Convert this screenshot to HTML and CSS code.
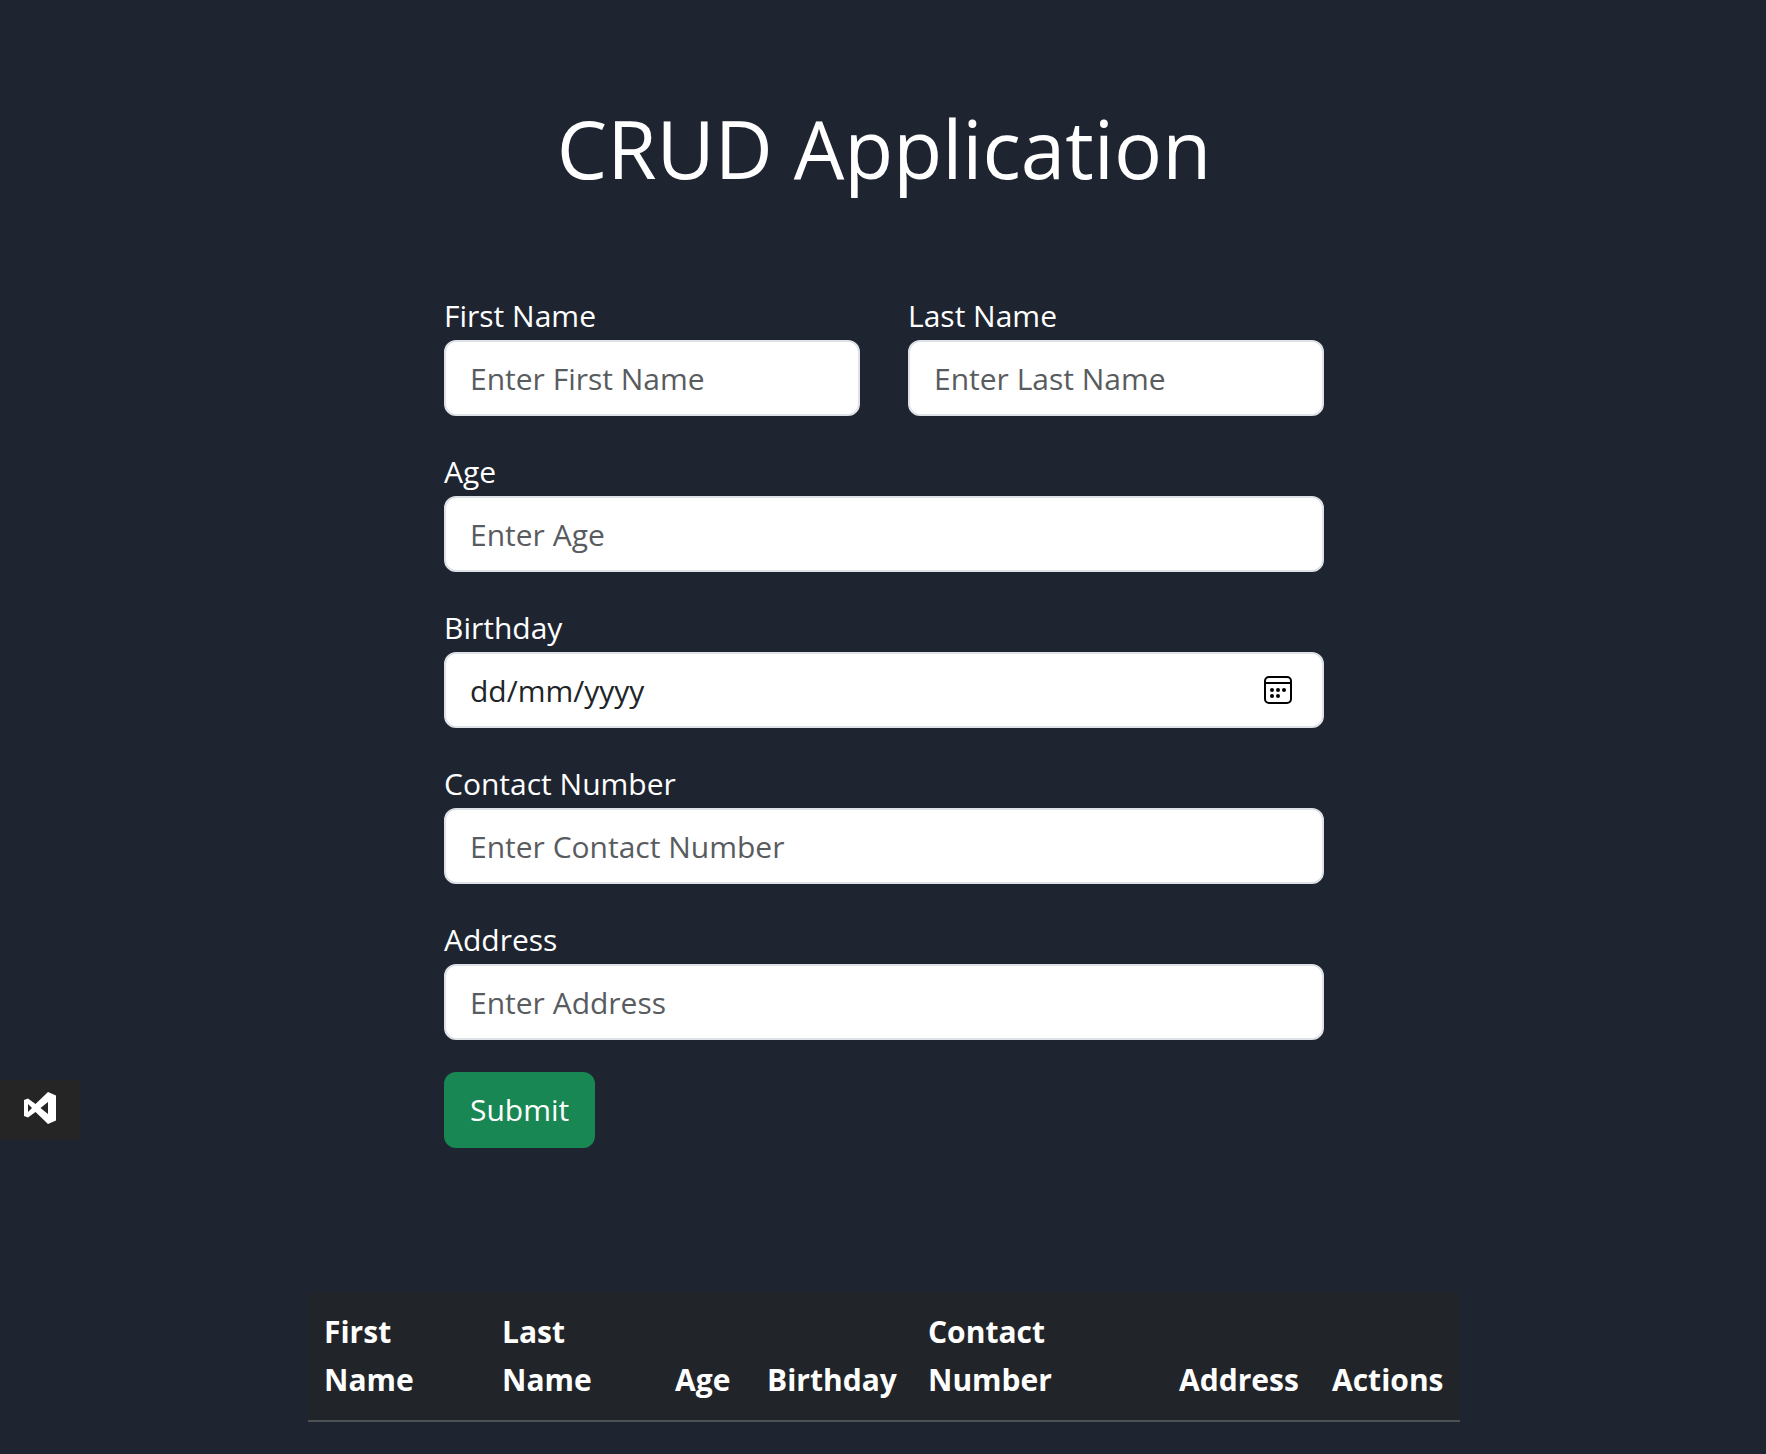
FILE: index.html
```html
<!DOCTYPE html>
<html lang="en">
<head>
<meta charset="utf-8">
<meta name="viewport" content="width=device-width, initial-scale=1">
<title>CRUD Application</title>
<link rel="stylesheet" href="styles.css">
</head>
<body>
<main class="page">
  <h1 class="title">CRUD Application</h1>
  <form class="form">
    <div class="row">
      <div class="field">
        <label for="first-name">First Name</label>
        <input class="control" id="first-name" type="text" placeholder="Enter First Name">
      </div>
      <div class="field">
        <label for="last-name">Last Name</label>
        <input class="control" id="last-name" type="text" placeholder="Enter Last Name">
      </div>
    </div>
    <div class="field">
      <label for="age">Age</label>
      <input class="control" id="age" type="text" inputmode="numeric" placeholder="Enter Age">
    </div>
    <div class="field">
      <label for="birthday">Birthday</label>
      <div class="date">
        <input class="control control-date" id="birthday" type="text" placeholder="dd/mm/yyyy">
        <button class="date-button" type="button" aria-label="Open calendar">
          <svg width="28" height="28" viewBox="0 0 28 28">
            <rect x="1" y="1" width="26" height="26" rx="4" fill="none" stroke="#000" stroke-width="2"/>
            <path d="M1 7h26" stroke="#000" stroke-width="2"/>
            <circle cx="8" cy="14" r="2"/><circle cx="14" cy="14" r="2"/><circle cx="20" cy="14" r="2"/>
            <circle cx="8" cy="20" r="2"/><circle cx="14" cy="20" r="2"/>
          </svg>
        </button>
      </div>
    </div>
    <div class="field">
      <label for="contact">Contact Number</label>
      <input class="control" id="contact" type="tel" placeholder="Enter Contact Number">
    </div>
    <div class="field">
      <label for="address">Address</label>
      <input class="control" id="address" type="text" placeholder="Enter Address">
    </div>
    <button class="submit" type="submit">Submit</button>
  </form>
  <table class="records">
    <colgroup>
      <col class="col-first"><col class="col-last"><col class="col-age"><col class="col-birthday"><col class="col-contact"><col class="col-address"><col class="col-actions">
    </colgroup>
    <thead>
      <tr>
        <th scope="col">First<br>Name</th>
        <th scope="col">Last<br>Name</th>
        <th scope="col">Age</th>
        <th scope="col">Birthday</th>
        <th scope="col">Contact<br>Number</th>
        <th scope="col">Address</th>
        <th scope="col">Actions</th>
      </tr>
    </thead>
  </table>
</main>
<button class="editor-tab" type="button" aria-label="Open in Visual Studio">
  <svg width="32" height="32" viewBox="0 0 32 32">
    <path fill="#fff" fill-rule="evenodd" d="M24 0l8 3.500v25L24 32 11.500 20 4 25.500 0 24V8l4-1.500L11.500 12zM24 10l-7.500 6 7.500 6zM4 12v8l4-4z"/>
  </svg>
</button>
</body>
</html>
```
FILE: styles.css
```css
* {
  box-sizing: border-box;
}

body {
  margin: 0;
  background: #1e2530;
  color: #fff;
  font-family: "Segoe UI", "Open Sans", "Noto Sans", sans-serif;
  font-size: 30px;
  line-height: 48px;
}

.page {
  display: flex;
  flex-direction: column;
  align-items: center;
  padding: 100px 16px 32px 18px;
}

.title {
  margin: 0 0 96px;
  font-size: 80px;
  font-weight: 400;
  line-height: 96px;
}

.form {
  display: flex;
  flex-direction: column;
  align-items: flex-start;
  gap: 32px;
  width: 100%;
  max-width: 880px;
}

.row {
  display: flex;
  gap: 48px;
  width: 100%;
}

.field {
  display: flex;
  flex: 1;
  flex-direction: column;
  width: 100%;
}

.control {
  width: 100%;
  height: 76px;
  padding: 12px 24px;
  border: 2px solid #dee2e6;
  border-radius: 12px;
  background: #fff;
  color: #212529;
  font: inherit;
}

.control::placeholder {
  color: #595c5f;
  opacity: 1;
}

.control-date::placeholder {
  color: #212529;
}

.date {
  position: relative;
}

.date-button {
  position: absolute;
  top: 24px;
  right: 32px;
  display: flex;
  padding: 0;
  border: 0;
  background: none;
}

.submit {
  height: 76px;
  padding: 0 26px;
  border: 0;
  border-radius: 12px;
  background: #198754;
  color: #fff;
  font: inherit;
}

.records {
  width: 100%;
  max-width: 1152px;
  margin-top: 144px;
  border-collapse: separate;
  border-spacing: 0;
  table-layout: fixed;
  background: #212529;
}

.records th {
  padding: 16px;
  border-bottom: 2px solid #4d5154;
  font-size: 30px;
  font-weight: 700;
  text-align: left;
  vertical-align: bottom;
  white-space: nowrap;
}

.col-first { width: 178px; }
.col-last { width: 173px; }
.col-age { width: 92px; }
.col-birthday { width: 161px; }
.col-contact { width: 251px; }
.col-address { width: 153px; }
.col-actions { width: 144px; }

.editor-tab {
  position: fixed;
  top: 1080px;
  left: 0;
  display: flex;
  align-items: center;
  justify-content: center;
  width: 80px;
  height: 60px;
  padding: 0 0 4px;
  border: 0;
  background: #252526;
}
```
